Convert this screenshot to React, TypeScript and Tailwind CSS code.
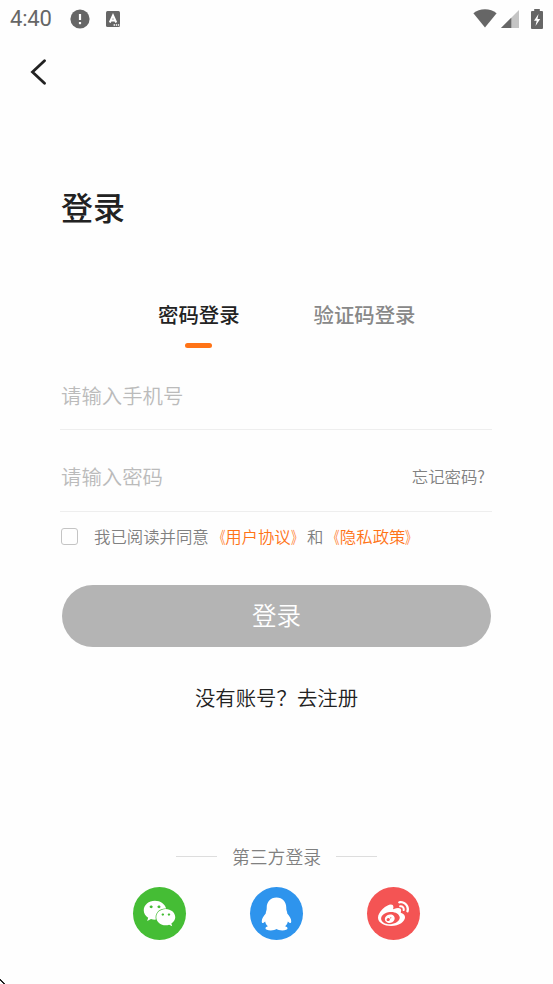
import React, { useState } from 'react';
import { FaWeibo, FaWeixin } from 'react-icons/fa6';

const AlertIcon: React.FC<{ className?: string }> = ({ className }) => (
    <svg className={className} viewBox="0 0 20 20"><circle cx="10" cy="10" r="9.6" fill="#666" /><path d="M10 5v6" stroke="#fff" strokeWidth="2.2" /><path d="M10 13v2.2" stroke="#fff" strokeWidth="2.2" /></svg>
);

const KeyboardIcon: React.FC<{ className?: string }> = ({ className }) => (
    <svg className={className} viewBox="0 0 14 16" fill="none"><rect width="14" height="16" rx="1.5" fill="#666" /><path d="M3.8 11.5 7 4.5l3.2 7M5 9.6h4" stroke="#fff" strokeWidth="2" /><path d="M7.6 14H9m.8 0h1.400m.8 0h1.200" stroke="#fff" strokeWidth="1.4" /></svg>
);

const WifiIcon: React.FC<{ className?: string }> = ({ className }) => (
    <svg className={className} viewBox="0 0 24 19" fill="#666"><path d="M12 18.5.4 4.2C3.6 1.6 7.6.3 12 .3s8.4 1.3 11.6 3.9L12 18.5Z" /></svg>
);

const SignalIcon: React.FC<{ className?: string }> = ({ className }) => (
    <svg className={className} viewBox="0 0 18 18"><path d="M0 18 18 0v18H0Z" fill="#c4c4c4" /><path d="M0 18 10.3 7.7V18H0Z" fill="#666" /></svg>
);

const BatteryIcon: React.FC<{ className?: string }> = ({ className }) => (
    <svg className={className} viewBox="0 0 12 20"><path d="M3.2 0h5.6v2H11a1 1 0 0 1 1 1v16a1 1 0 0 1-1 1H1a1 1 0 0 1-1-1V3a1 1 0 0 1 1-1h2.2V0Z" fill="#666" /><path d="M7.5 5 3 11.8h2.700L4.500 17 9.200 10H6.500l1-5Z" fill="#fff" /></svg>
);

const BackIcon: React.FC<{ className?: string }> = ({ className }) => (
    <svg className={className} viewBox="0 0 16 26" fill="none" stroke="#222" strokeWidth="2.8" strokeLinecap="round" strokeLinejoin="miter"><path d="M14.500 1.800 2.500 13l12 11.200" /></svg>
);

const PenguinIcon: React.FC<{ className?: string }> = ({ className }) => (
    <svg className={className} viewBox="0 0 32 35" fill="#fff"><path d="M16 .5C9.6.5 5.900 5.100 5.900 11c0 1.500-.1 2.300-.5 3.300-.4 1.200-.5 2-.5 2.800C2.500 19.700.8 22.600.8 25c0 1.200.3 1.800.9 1.800.9 0 1.700-.8 2.600-1.600.4 2 1.300 3.600 2.800 5-1.600.5-2.500 1.200-2.500 2.100 0 1.500 2.200 2.200 5.400 2.200 2.700 0 5-.4 6-1.400 1 1 3.300 1.400 6 1.400 3.200 0 5.400-.7 5.400-2.200 0-.9-.9-1.600-2.500-2.100 1.500-1.400 2.400-3 2.800-5 .9.8 1.700 1.600 2.600 1.600.6 0 .9-.6.9-1.800 0-2.400-1.700-5.300-4.100-7.900 0-.8-.1-1.600-.5-2.800-.4-1-.5-1.800-.5-3.300C26.100 5.100 22.400.5 16 .5Z" /></svg>
);

// Agreement link with condensed title marks
const DocLink: React.FC<{ title: string }> = ({ title }) => (
    <a className="flex text-[#ff7316]">
        <span className="origin-right scale-x-[0.7]">《</span>
        {title}
        <span className="origin-left scale-x-[0.7]">》</span>
    </a>
);

type LoginMode = 'password' | 'code';

const tabs: { id: LoginMode; label: string }[] = [
    { id: 'password', label: '密码登录' },
    { id: 'code', label: '验证码登录' },
];

const App: React.FC = () => {
    const [mode, setMode] = useState<LoginMode>('password');
    const [agreed, setAgreed] = useState(false);

    return (
        <div lang="zh-CN" className="relative h-[984px] w-[553px] overflow-hidden bg-[#fefefe] font-['Noto_Sans_CJK_SC',sans-serif] font-[350] text-[#222]">
            <header className="flex h-[38px] items-center pl-[10px] pr-[10px] pb-px">
                <span className="font-[Roboto,sans-serif] text-[22px] font-normal tracking-[-0.2px] text-[#666]">4:40</span>
                <AlertIcon className="ml-[18px] h-5 w-5" />
                <KeyboardIcon className="ml-4 h-4 w-[14px]" />
                <WifiIcon className="ml-auto h-[19px] w-6" />
                <SignalIcon className="ml-1 h-[18px] w-[18px]" />
                <BatteryIcon className="ml-3 h-5 w-3" />
            </header>

            <nav className="flex h-[68px] items-center pl-[30px]">
                <button aria-label="返回"><BackIcon className="h-[26px] w-4" /></button>
            </nav>

            <main className="px-[61px]">
                <h1 className="mt-[76px] h-12 text-[32px] font-medium leading-[48px]">登录</h1>

                <div className="mt-[69px] flex pl-[97px]">
                    {tabs.map(tab => (
                        <button
                            key={tab.id}
                            onClick={() => setMode(tab.id)}
                            className={`mr-[74px] flex h-[49px] shrink-0 flex-col items-center text-[20.4px] font-medium leading-[30px] ${mode === tab.id ? 'text-[#222]' : 'text-[#888]'}`}
                        >
                            {tab.label}
                            {mode === tab.id && <span className="mt-[14px] h-[5px] w-[27px] shrink-0 rounded-full bg-[#ff7316]" />}
                        </button>
                    ))}
                </div>

                <div className="-ml-px mt-[14px] flex h-[68px] items-center border-b border-[#eee] pl-px">
                    <input className="w-full text-[20.4px] outline-none placeholder:text-[#bbb]" placeholder="请输入手机号" />
                </div>
                <div className="-ml-px mt-[13px] flex h-[69px] items-center border-b border-[#eee] pb-0.5 pl-px">
                    <input className="w-0 flex-1 text-[20.4px] outline-none placeholder:text-[#bbb]" placeholder="请输入密码" />
                    <button className="mr-[7px] text-[16.4px] text-[#808080]">忘记密码?</button>
                </div>

                <div className="mt-3 flex h-6 items-center whitespace-nowrap text-[16.4px] text-[#808080]">
                    <button
                        aria-label="同意协议"
                        onClick={() => setAgreed(!agreed)}
                        className={`mr-4 h-[17px] w-[17px] rounded-[3px] border-[1.5px] border-[#c4c4c4] ${agreed ? 'bg-[#ff7316]' : ''}`}
                    />
                    我已阅读并同意
                    <DocLink title="用户协议" />
                    和
                    <DocLink title="隐私政策" />
                </div>

                <button className="ml-px mt-[37px] block h-[62px] w-[429px] rounded-full bg-[#b4b4b4] pb-0.5 text-[24.5px] text-white">登录</button>
                <button className="mx-auto mt-[35px] block h-[30px] text-[20.4px] leading-[30px]">没有账号？去注册</button>
            </main>

            <footer className="mt-[129px]">
                <div className="flex h-[30px] items-center justify-center gap-[15px] text-[17.8px] text-[#808080]">
                    <span className="h-px w-[41px] bg-[#ddd]" />
                    第三方登录
                    <span className="h-px w-[41px] bg-[#ddd]" />
                </div>
                <div className="mt-[15.5px] flex justify-center gap-16">
                    <button className="flex h-[53px] w-[53px] items-center justify-center rounded-full bg-[#45bd35]"><FaWeixin className="h-[33px] w-[33px] text-white" /></button>
                    <button className="flex h-[53px] w-[53px] items-center justify-center rounded-full bg-[#2e94ed] pt-px"><PenguinIcon className="h-[34px] w-[31px]" /></button>
                    <button className="flex h-[53px] w-[53px] items-center justify-center rounded-full bg-[#f45454] pt-0.5"><FaWeibo className="h-[31px] w-[31px] text-white" /></button>
                </div>
            </footer>

            {/* tip of the mouse pointer at the window corner */}
            <svg className="absolute bottom-0 left-0 h-[5px] w-[5px]" viewBox="0 0 5 5"><path d="M0 0h1v1h1v1h1v1h1v1h1v1H3V4H2V3H1V2H0V0Z" fill="#222" /></svg>
        </div>
    );
};

export default App;
